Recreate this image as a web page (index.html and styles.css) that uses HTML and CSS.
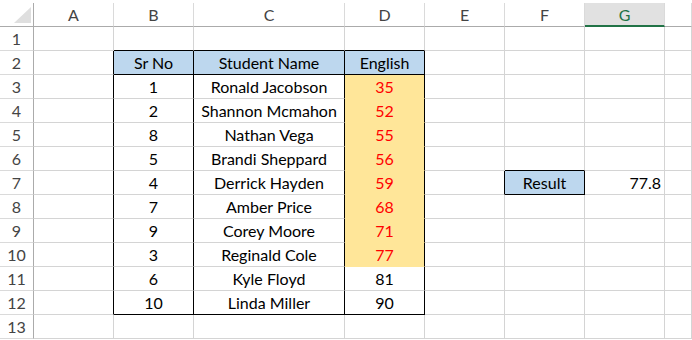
FILE: index.html
```html
<!DOCTYPE html>
<html lang="en">
<head>
    <meta charset="UTF-8">
    <meta name="viewport" content="width=device-width, initial-scale=1.0">
    <title>English marks</title>
    <link rel="stylesheet" href="styles.css">
</head>
<body>
    <div class="sheet">
        <!-- column letters -->
        <div class="row head">
            <div class="corner">
                <svg width="17" height="16" viewBox="0 0 17 16"><polygon points="17,0 17,16 0,16" fill="#dfdfdf"/></svg>
            </div>
            <div class="col">A</div>
            <div class="col">B</div>
            <div class="col">C</div>
            <div class="col">D</div>
            <div class="col">E</div>
            <div class="col">F</div>
            <div class="col active">G</div>
            <div class="col"></div>
        </div>

        <div class="row">
            <div class="num">1</div>
            <div class="cell"></div>
            <div class="cell edge-b"></div>
            <div class="cell edge-b"></div>
            <div class="cell edge-b"></div>
            <div class="cell"></div>
            <div class="cell"></div>
            <div class="cell"></div>
            <div class="cell"></div>
        </div>

        <!-- table header -->
        <div class="row">
            <div class="num">2</div>
            <div class="cell edge-r"></div>
            <div class="cell t th">Sr No</div>
            <div class="cell t th">Student Name</div>
            <div class="cell t th">English</div>
            <div class="cell"></div>
            <div class="cell"></div>
            <div class="cell"></div>
            <div class="cell"></div>
        </div>

        <div class="row">
            <div class="num">3</div>
            <div class="cell edge-r"></div>
            <div class="cell t">1</div>
            <div class="cell t">Ronald Jacobson</div>
            <div class="cell t low">35</div>
            <div class="cell"></div>
            <div class="cell"></div>
            <div class="cell"></div>
            <div class="cell"></div>
        </div>

        <div class="row">
            <div class="num">4</div>
            <div class="cell edge-r"></div>
            <div class="cell t">2</div>
            <div class="cell t">Shannon Mcmahon</div>
            <div class="cell t low">52</div>
            <div class="cell"></div>
            <div class="cell"></div>
            <div class="cell"></div>
            <div class="cell"></div>
        </div>

        <div class="row">
            <div class="num">5</div>
            <div class="cell edge-r"></div>
            <div class="cell t">8</div>
            <div class="cell t">Nathan Vega</div>
            <div class="cell t low">55</div>
            <div class="cell"></div>
            <div class="cell"></div>
            <div class="cell"></div>
            <div class="cell"></div>
        </div>

        <div class="row">
            <div class="num">6</div>
            <div class="cell edge-r"></div>
            <div class="cell t">5</div>
            <div class="cell t">Brandi Sheppard</div>
            <div class="cell t low">56</div>
            <div class="cell"></div>
            <div class="cell edge-b"></div>
            <div class="cell"></div>
            <div class="cell"></div>
        </div>

        <div class="row">
            <div class="num">7</div>
            <div class="cell edge-r"></div>
            <div class="cell t">4</div>
            <div class="cell t">Derrick Hayden</div>
            <div class="cell t low">59</div>
            <div class="cell edge-r"></div>
            <div class="cell t th">Result</div>
            <div class="cell right">77.8</div>
            <div class="cell"></div>
        </div>

        <div class="row">
            <div class="num">8</div>
            <div class="cell edge-r"></div>
            <div class="cell t">7</div>
            <div class="cell t">Amber Price</div>
            <div class="cell t low">68</div>
            <div class="cell"></div>
            <div class="cell"></div>
            <div class="cell"></div>
            <div class="cell"></div>
        </div>

        <div class="row">
            <div class="num">9</div>
            <div class="cell edge-r"></div>
            <div class="cell t">9</div>
            <div class="cell t">Corey Moore</div>
            <div class="cell t low">71</div>
            <div class="cell"></div>
            <div class="cell"></div>
            <div class="cell"></div>
            <div class="cell"></div>
        </div>

        <div class="row">
            <div class="num">10</div>
            <div class="cell edge-r"></div>
            <div class="cell t">3</div>
            <div class="cell t">Reginald Cole</div>
            <div class="cell t low">77</div>
            <div class="cell"></div>
            <div class="cell"></div>
            <div class="cell"></div>
            <div class="cell"></div>
        </div>

        <div class="row">
            <div class="num">11</div>
            <div class="cell edge-r"></div>
            <div class="cell t">6</div>
            <div class="cell t">Kyle Floyd</div>
            <div class="cell t">81</div>
            <div class="cell"></div>
            <div class="cell"></div>
            <div class="cell"></div>
            <div class="cell"></div>
        </div>

        <div class="row">
            <div class="num">12</div>
            <div class="cell edge-r"></div>
            <div class="cell t edge-b">10</div>
            <div class="cell t edge-b">Linda Miller</div>
            <div class="cell t edge-b">90</div>
            <div class="cell"></div>
            <div class="cell"></div>
            <div class="cell"></div>
            <div class="cell"></div>
        </div>

        <div class="row">
            <div class="num">13</div>
            <div class="cell"></div>
            <div class="cell"></div>
            <div class="cell"></div>
            <div class="cell"></div>
            <div class="cell"></div>
            <div class="cell"></div>
            <div class="cell"></div>
            <div class="cell"></div>
        </div>
    </div>
</body>
</html>
```

FILE: styles.css
```css
body {
    margin: 0;
    background: #fff;
    font-family: Lato, "Open Sans", sans-serif;
    font-size: 16px;
    color: #000;
}
.sheet {
    width: 692px;
    overflow: hidden;
}
.row {
    display: grid;
    grid-template-columns: 34px 80px 80px 151px 80px 80px 80px 80px 1fr;
    height: 24px;
}
.row > div {
    box-sizing: border-box;
    display: flex;
    align-items: flex-end;
    justify-content: center;
    padding: 0 3px 2px;
    white-space: nowrap;
    overflow: hidden;
}

/* column and row headings */
.head {
    height: 27px;
    padding-top: 3px;
    box-sizing: border-box;
}
.corner,
.col {
    border-right: 1px solid #dadada;
    border-bottom: 1px solid #ababab;
    color: #444;
}
.corner {
    border-right-color: #ababab;
    justify-content: flex-end !important;
    padding: 0 2px 3px 0 !important;
}
.col.active {
    background: #e1e1e1;
    color: #217346;
    border-bottom: 2px solid #217346;
    padding-bottom: 1px;
}
.num {
    border-right: 1px solid #ababab;
    border-bottom: 1px solid #dadada;
    color: #444;
}

/* cells */
.cell {
    border-right: 1px solid #d4d4d4;
    border-bottom: 1px solid #d4d4d4;
}
.cell.right {
    justify-content: flex-end;
}
.t,
.edge-r {
    border-right-color: #000;
}
.edge-b {
    border-bottom-color: #000;
}
.th {
    background: #bdd7ee;
    border-bottom-color: #000;
}
.low {
    background: #ffe699;
    color: #ff0000;
    border-bottom-color: #ffe699;
}
```
